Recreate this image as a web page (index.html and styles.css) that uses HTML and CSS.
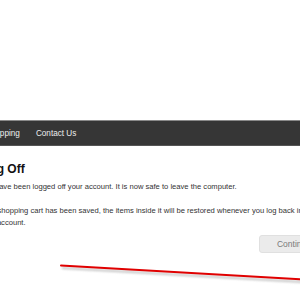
FILE: index.html
```html
<!DOCTYPE html>
<html lang="en">

<head>
    <meta charset="UTF-8">
    <title>Log Off</title>
    <link rel="stylesheet" href="styles.css">
</head>

<body>
    <div class="page">
        <div class="header"></div>
        <nav class="menu">
            <a href="#">Shipping</a>
            <a href="#">Contact Us</a>
        </nav>
        <div class="content">
            <h1>Log Off</h1>
            <p>
                You have been logged off your account. It is now safe to leave the computer.<br><br>
                Your shopping cart has been saved, the items inside it will be restored whenever you log back into your account.
            </p>
            <div class="buttons">
                <a href="#" class="btn">Continue</a>
            </div>
        </div>
    </div>

    <svg class="mark" width="300" height="300" viewBox="0 0 300 300">
        <defs>
            <filter id="soft" x="-5%" y="-200%" width="110%" height="500%">
                <feGaussianBlur stdDeviation="1.2" />
            </filter>
        </defs>
        <line x1="62" y1="268" x2="320" y2="283" stroke="#9a9a9a" stroke-width="2" opacity="0.6" filter="url(#soft)" />
        <line x1="61" y1="265.5" x2="320" y2="280.5" stroke="#e00000" stroke-width="2" stroke-linecap="round" />
    </svg>
</body>

</html>
```

FILE: styles.css
```css
body {
    margin: 0;
    font-family: 'Liberation Sans', Arial, sans-serif;
    background: #fff;
    color: #222;
    overflow: hidden;
}

.page {
    width: 349px;
    margin-left: -20px;
}

.header {
    height: 120px;
}

.menu {
    display: flex;
    height: 24px;
    align-items: center;
    background: #363636;
    border-top: 1px solid #8a8a8a;
    border-bottom: 1px solid #555;
}

.menu a {
    padding: 0 8px;
    color: #eee;
    font-size: 8.2px;
    text-decoration: none;
}

.content {
    padding-top: 16px;
}

h1 {
    margin: 0 0 5px;
    padding-left: 2px;
    font-size: 12px;
    line-height: 14px;
    color: #111;
}

p {
    width: 338px;
    margin: 0;
    font-size: 7.6px;
    line-height: 12px;
    color: #333;
}

.buttons {
    display: flex;
    justify-content: flex-end;
    margin-top: 6px;
}

.btn {
    height: 16px;
    line-height: 16px;
    padding: 0 17px;
    background: #ebebeb;
    border: 1px solid #e0e0e0;
    border-radius: 3px;
    color: #7a7a7a;
    font-size: 8.5px;
    text-decoration: none;
}

.mark {
    position: absolute;
    top: 0;
    left: 0;
    pointer-events: none;
}
```
